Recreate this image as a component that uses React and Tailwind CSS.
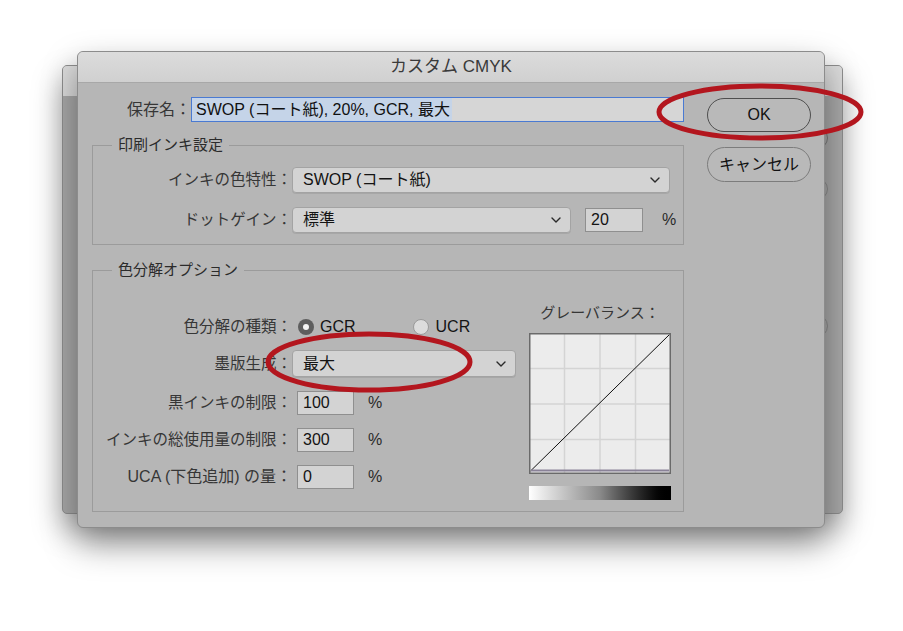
import React from 'react'

const Chevron = () => (
  <svg width="10" height="6" viewBox="0 0 10 6" className="shrink-0">
    <path d="M1 1l4 4 4-4" fill="none" stroke="#2a2a2a" strokeWidth="1.4" strokeLinecap="round" strokeLinejoin="round" />
  </svg>
)

const Select = ({ value, w, h = 'h-[26px]' }) => (
  <div className={`${w} ${h} flex items-center justify-between rounded-[4px] border border-[#a3a3a3] bg-[#d3d3d3] pl-[10px] pr-[9px] text-[16px] text-[#141414] shadow-[0_1px_0_rgba(0,0,0,0.08)]`}>
    <span>{value}</span>
    <Chevron />
  </div>
)

const NumField = ({ value, w = 'w-[58px]' }) => (
  <div className={`${w} h-[24px] flex items-center border border-[#8f8f8f] bg-[#d3d3d3] pl-[5px] text-[16px] text-[#141414]`}>
    {value}
  </div>
)

const Group = ({ title, className, children }) => (
  <div className={`border border-[#9b9b9b] ${className}`}>
    <div className="-mt-[11px] ml-[19px] w-fit bg-[#b6b6b6] px-[6px] text-[15px] leading-[20px] text-[#2b2b2b]">{title}</div>
    {children}
  </div>
)

const Label = ({ children, w = 'w-[199px]', size = 'text-[15.5px]' }) => (
  <div className={`${w} ${size} shrink-0 text-right text-[#363636]`}>{children}</div>
)

function GrayBalance() {
  return (
    <svg width="142" height="141" viewBox="0 0 142 141" className="block">
      <rect x="0" y="0" width="142" height="141" fill="#ececec" />
      {[35.5, 71, 106.5].map(p => (
        <g key={p}>
          <line x1={p} y1="1" x2={p} y2="140" stroke="#d4d4d4" strokeWidth="1.5" />
          <line x1="1" y1={p} x2="141" y2={p} stroke="#d4d4d4" strokeWidth="1.5" />
        </g>
      ))}
      <line x1="1.5" y1="138" x2="140.5" y2="1.5" stroke="#111" strokeWidth="1" />
      <line x1="2" y1="137.5" x2="140" y2="137.5" stroke="#8a8298" strokeWidth="2" />
      <rect x="0.75" y="0.75" width="140.5" height="139.5" fill="none" stroke="#6a6a6a" strokeWidth="1.5" />
    </svg>
  )
}

export default function App() {
  return (
    <div className="relative w-[903px] h-[631px] overflow-hidden bg-white font-['Liberation_Sans','Noto_Sans_CJK_JP',sans-serif]">
      {/* back window */}
      <div className="absolute left-[62px] top-[65px] w-[781px] h-[449px] overflow-hidden rounded-[5px] border border-[#8e8e8e] bg-[#a9a9a9] shadow-[0_14px_30px_rgba(0,0,0,0.35)]">
        <div className="h-[30px] bg-[#dcdcdc]" />
        <div className="flex flex-col items-end pr-[14px] pt-[31px]">
          <div className="h-[22px] w-[100px] rounded-full border border-[#7a7a7a]" />
          <div className="mt-[29px] h-[22px] w-[100px] rounded-full border border-[#8a8a8a]" />
          <div className="mt-[114px] h-[24px] w-[100px] rounded-full border border-[#8a8a8a]" />
        </div>
      </div>

      {/* front window */}
      <div className="absolute left-[77px] top-[51px] w-[748px] h-[477px] overflow-hidden rounded-[6px] border border-[#8c8c8c] bg-[#b6b6b6] shadow-[0_16px_34px_rgba(0,0,0,0.4)]">
        <div className="h-[31px] flex items-center justify-center border-b border-[#a8a8a8] bg-gradient-to-b from-[#dcdcdc] to-[#d0d0d0] text-[17px] text-[#3a3a3a]">
          カスタム CMYK
        </div>

        <div className="flex">
          <div className="w-[606px] shrink-0 pl-[14px]">
            {/* save name */}
            <div className="mt-[14px] flex items-center">
              <Label w="w-[99px]" size="text-[16px]">保存名：</Label>
              <div className="h-[25px] w-[493px] flex items-center border border-[#4a7ad2] bg-[#d6d6d6] text-[16px] text-[#111]">
                <span className="h-full flex items-center bg-[#c5d4e8] pl-[4px] pr-[2px]">SWOP (コート紙), 20%, GCR, 最大</span>
              </div>
            </div>

            {/* print ink settings */}
            <Group title="印刷インキ設定" className="mt-[23px] h-[100px]">
              <div className="mt-[12px] flex items-center">
                <Label>インキの色特性：</Label>
                <Select value="SWOP (コート紙)" w="w-[378px]" />
              </div>
              <div className="mt-[14px] flex items-center">
                <Label>ドットゲイン：</Label>
                <Select value="標準" w="w-[279px]" />
                <div className="ml-[14px]"><NumField value="20" /></div>
                <span className="ml-[19px] text-[16px] text-[#2a2a2a]">%</span>
              </div>
            </Group>

            {/* separation options */}
            <Group title="色分解オプション" className="mt-[25px] h-[242px]">
              <div className="flex">
                <div className="flex-1">
                  <div className="mt-[35px] h-[24px] flex items-center">
                    <Label>色分解の種類：</Label>
                    <div className="ml-[6px] flex items-center">
                      <div className="h-[16px] w-[16px] flex items-center justify-center rounded-full bg-[#5e5e5e]">
                        <div className="h-[6px] w-[6px] rounded-full bg-[#f4f4f4]" />
                      </div>
                      <span className="ml-[6px] text-[16px] text-[#141414]">GCR</span>
                    </div>
                    <div className="ml-[57px] flex items-center">
                      <div className="h-[16px] w-[16px] rounded-full border border-[#9a9a9a] bg-[#dcdcdc]" />
                      <span className="ml-[7px] text-[16px] text-[#141414]">UCR</span>
                    </div>
                  </div>
                  <div className="mt-[11px] flex items-center">
                    <Label>墨版生成：</Label>
                    <Select value="最大" w="w-[224px]" h="h-[27px]" />
                  </div>
                  {[
                    ['黒インキの制限：', '100', 'text-[15.5px]'],
                    ['インキの総使用量の制限：', '300', 'text-[15.5px]'],
                    ['UCA (下色追加) の量：', '0', 'text-[16px]'],
                  ].map(([l, v, s], i) => (
                    <div key={l} className={`${i === 0 ? 'mt-[14px]' : 'mt-[13px]'} flex items-center`}>
                      <Label size={s}>{l}</Label>
                      <div className="ml-[5px]"><NumField value={v} w="w-[57px]" /></div>
                      <span className="ml-[14px] text-[16px] text-[#2a2a2a]">%</span>
                    </div>
                  ))}
                </div>
                <div className="mr-[12px] w-[142px] shrink-0 pt-[23px]">
                  <div className="text-center text-[15px] leading-[20px] text-[#363636]">グレーバランス：</div>
                  <div className="mt-[10px]"><GrayBalance /></div>
                  <div className="mt-[12px] h-[14px] w-[142px] bg-gradient-to-r from-white via-[#8a8a8a] to-black" />
                </div>
              </div>
            </Group>
          </div>

          {/* buttons */}
          <div className="pl-[23px] pt-[15px]">
            <div className="h-[34px] w-[104px] flex items-center justify-center rounded-full border-[1.5px] border-[#4e4e4e] bg-[#b9b9b9] text-[16px] text-[#111]">OK</div>
            <div className="mt-[15px] h-[35px] w-[104px] flex items-center justify-center rounded-full border border-[#7c7c7c] bg-[#b9b9b9] text-[16px] text-[#111]">キャンセル</div>
          </div>
        </div>
      </div>

      {/* red annotation marks */}
      <svg className="pointer-events-none absolute left-0 top-0" width="903" height="631" viewBox="0 0 903 631">
        <ellipse cx="760" cy="112" rx="101" ry="26" fill="none" stroke="#b3161e" strokeWidth="5" />
        <ellipse cx="369" cy="362" rx="101" ry="28" fill="none" stroke="#b3161e" strokeWidth="5" />
      </svg>
    </div>
  )
}
